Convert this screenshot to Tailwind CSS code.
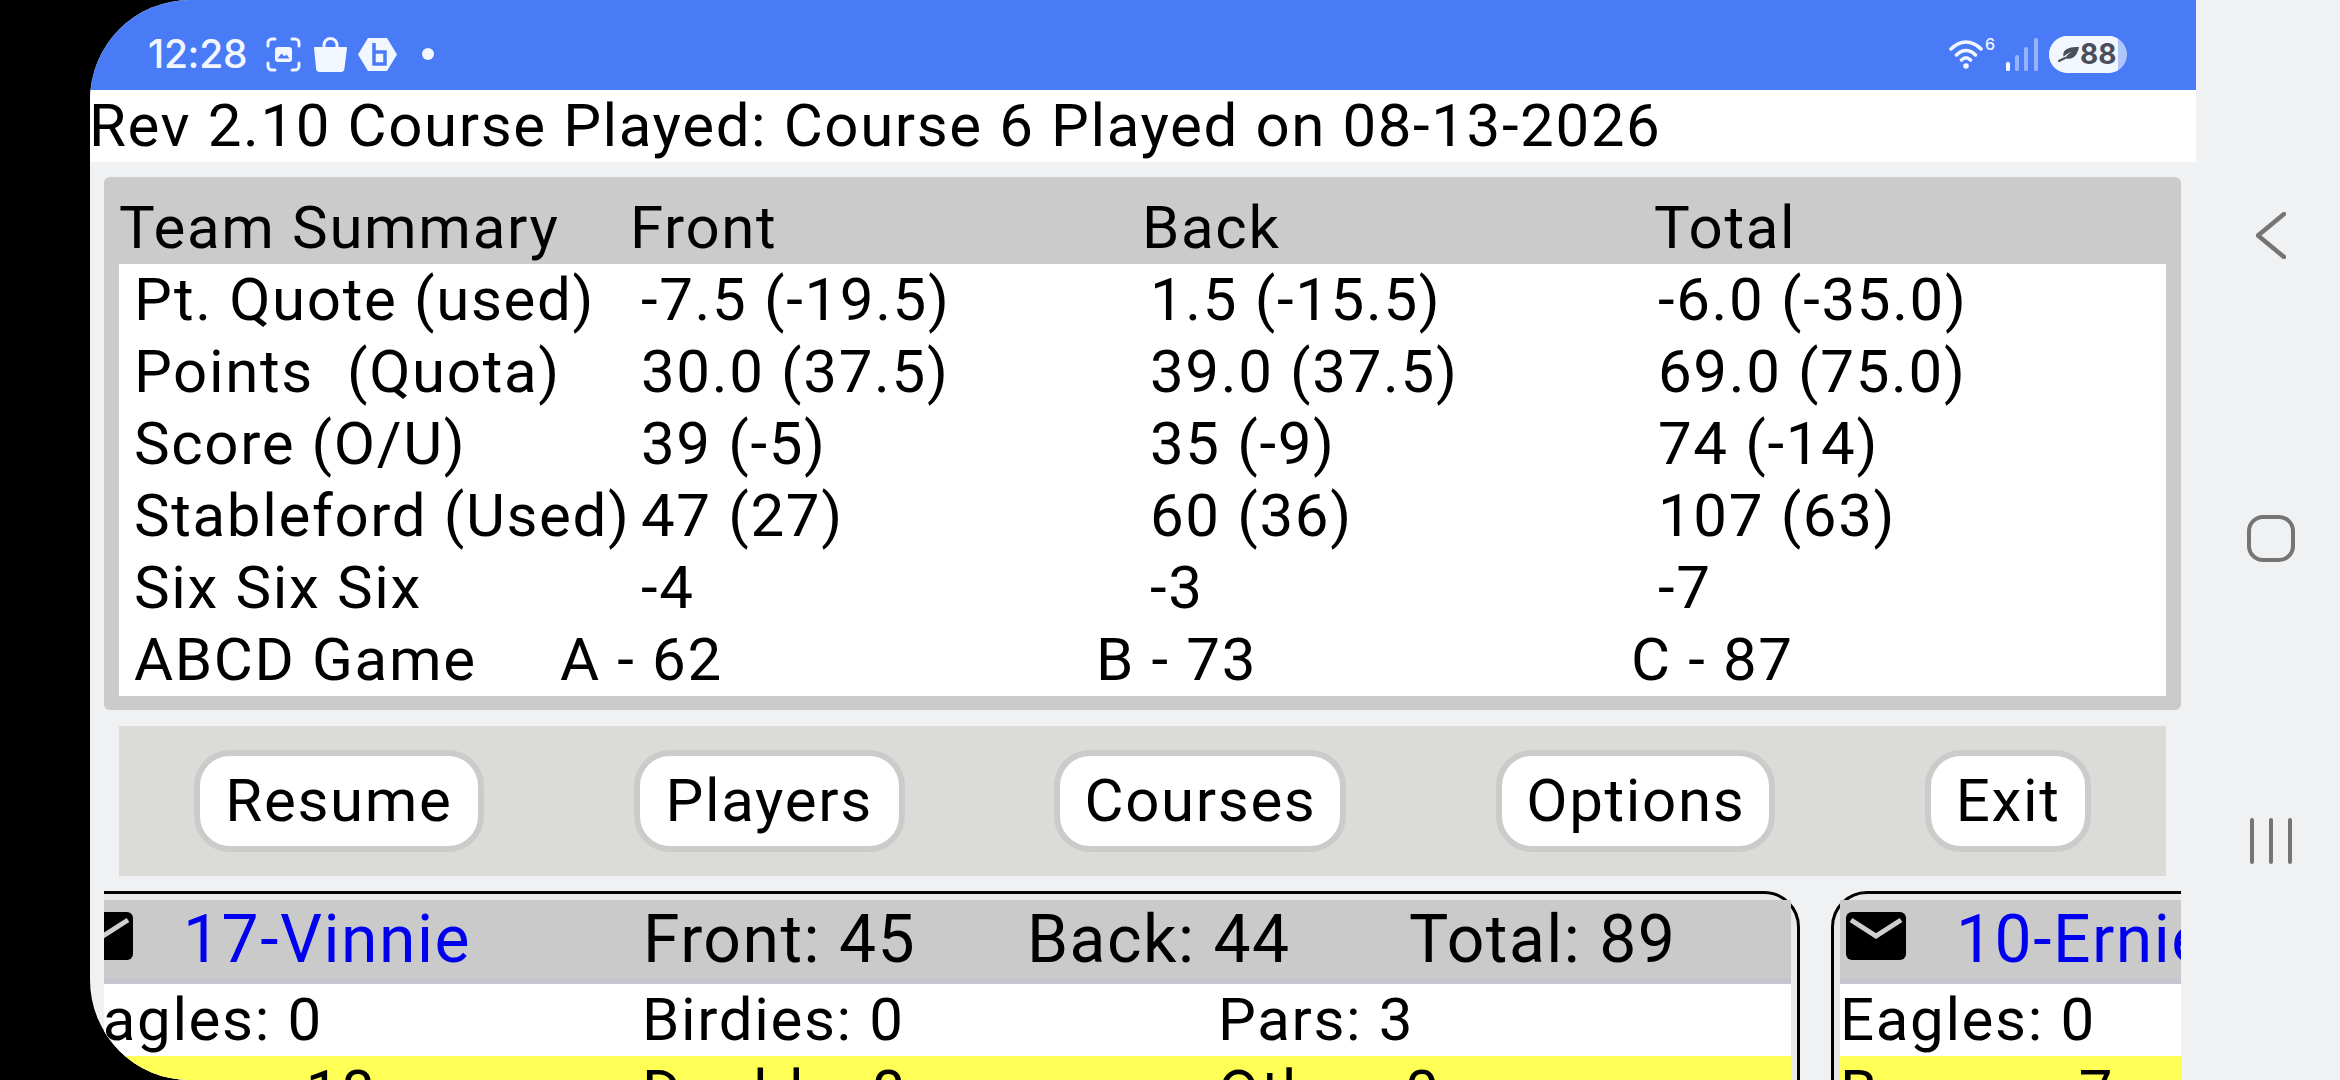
<!doctype html>
<html>
<head>
<meta charset="utf-8">
<title>Team Summary</title>
<script src="https://cdn.jsdelivr.net/npm/@tailwindcss/browser@4"></script>
</head>
<body class="bg-black">
<div class="w-[2340px] h-[1080px] overflow-hidden bg-black pl-[90px] font-[family-name:Roboto,sans-serif] text-black text-[60px] leading-[72px] tracking-[1.65px]">
  <div class="flex w-[2250px] h-[1080px] overflow-hidden rounded-l-[100px] bg-[#f0f1f3]">

    <!-- app column -->
    <div class="w-[2106px] shrink-0">
      <!-- status bar -->
      <div class="h-[90px] bg-[#4a7bf7] flex items-center justify-between text-[#f1f6ff] pt-[18px] pl-[58px] pr-[69px] tracking-normal">
        <div class="flex items-center">
          <span class="font-[family-name:Inter,sans-serif] text-[39px] leading-[38px] font-medium tracking-[-0.3px] w-[118px]">12:28</span>
          <svg class="w-[35px] h-[35px]" viewBox="0 0 35 35" fill="none" stroke="currentColor" stroke-width="3" stroke-linecap="round">
            <path d="M2 9V6a4 4 0 0 1 4-4h3M26 2h3a4 4 0 0 1 4 4v3M33 26v3a4 4 0 0 1-4 4h-3M9 33H6a4 4 0 0 1-4-4v-3"/>
            <rect x="9" y="10" width="17" height="15" rx="3" fill="currentColor" stroke="none"/>
            <path d="M11.5 21.5l4-5 3 3 2-2 3 4z" fill="#4a7bf7" stroke="none"/>
          </svg>
          <svg class="w-[33px] h-[35px] ml-[13px]" viewBox="0 0 33 35" fill="none">
            <path d="M10 12V8a6.500 6.500 0 0 1 13 0v4" stroke="currentColor" stroke-width="3"/>
            <path d="M1 10h31c.6 0 1 .5 1 1l-2.500 20a4 4 0 0 1-4 4h-20.500a4 4 0 0 1-4-4L0 11c0-.5.4-1 1-1z" fill="currentColor"/>
          </svg>
          <svg class="w-[39px] h-[35px] ml-[11px]" viewBox="0 0 39 35">
            <path d="M10 1h19l10 16.500-10 16.500h-19l-10-16.500z" fill="currentColor"/>
            <path d="M16 6v21h11v-12h-11" fill="none" stroke="#4a7bf7" stroke-width="3.500"/>
          </svg>
          <span class="w-[12px] h-[12px] rounded-full bg-[#f1f6ff] ml-[25px]"></span>
        </div>
        <div class="flex items-center">
          <svg class="w-[34px] h-[30px]" viewBox="0 0 34 30" fill="none" stroke="currentColor" stroke-width="3.500" stroke-linecap="round">
            <path d="M2 10c9-9.500 21-9.500 30 0M7.500 16c6-6 13-6 19 0M12.500 21c3-3 6-3 9 0"/>
            <circle cx="17" cy="27" r="2.800" fill="currentColor" stroke="none"/>
          </svg>
          <span class="self-start font-[family-name:Inter,sans-serif] text-[16px] leading-[16px] font-medium ml-[2px] w-[21px]">6</span>
          <svg class="w-[32px] h-[33px]" viewBox="0 0 32 33" fill="currentColor">
            <rect x="0" y="24" width="4" height="9" rx="1.500"/>
            <g opacity="0.45">
              <rect x="9" y="17" width="4" height="16" rx="1.500"/>
              <rect x="18" y="9" width="4" height="24" rx="1.500"/>
              <rect x="28" y="0" width="4" height="33" rx="1.500"/>
            </g>
          </svg>
          <div class="relative ml-[11px] w-[78px] h-[37px] rounded-full overflow-hidden bg-[#b0c6fb]">
            <div class="w-[69px] h-[37px] bg-[#f1f6ff] flex items-center pl-[9px]">
              <svg class="w-[22px] h-[15px] shrink-0" viewBox="0 0 22 15">
                <path d="M21 0C13 0 7 1 5.500 6c-.4 1.400-.3 2.700.3 3.700C8 7.500 11 5.500 14 4.500 11.500 6 9 8 7 11c2.500 1.500 6.500 1 9.500-1.500C19 7.500 20 4 21 0z" fill="#4a4e5a"/>
                <path d="M1 14l6-3" stroke="#4a4e5a" stroke-width="2" stroke-linecap="round"/>
              </svg>
              <span class="font-[family-name:Inter,sans-serif] text-[28px] leading-[37px] font-bold text-[#4a4e5a]">88</span>
            </div>
          </div>
        </div>
      </div>

      <!-- title -->
      <div class="h-[72px] bg-white whitespace-nowrap tracking-[1.6px] ml-[-1px]">Rev 2.10 Course Played: Course 6 Played on 08-13-2026</div>

      <!-- team summary -->
      <div class="mt-[15px] ml-[14px] w-[2077px] h-[533px] bg-[#cbcbcb] rounded-[6px] p-[15px]">
        <div class="grid grid-cols-[511px_512px_512px_1fr] h-[72px]">
          <div>Team Summary</div><div>Front</div><div>Back</div><div>Total</div>
        </div>
        <div class="bg-white h-[432px] pl-[15px] whitespace-nowrap">
          <div class="grid grid-cols-[507px_509px_508px_1fr]"><div>Pt. Quote (used)</div><div>-7.5 (-19.5)</div><div>1.5 (-15.5)</div><div>-6.0 (-35.0)</div></div>
          <div class="grid grid-cols-[507px_509px_508px_1fr]"><div class="whitespace-pre">Points  (Quota)</div><div>30.0 (37.5)</div><div>39.0 (37.5)</div><div>69.0 (75.0)</div></div>
          <div class="grid grid-cols-[507px_509px_508px_1fr]"><div>Score (O/U)</div><div>39 (-5)</div><div>35 (-9)</div><div>74 (-14)</div></div>
          <div class="grid grid-cols-[507px_509px_508px_1fr]"><div>Stableford (Used)</div><div>47 (27)</div><div>60 (36)</div><div>107 (63)</div></div>
          <div class="grid grid-cols-[507px_509px_508px_1fr]"><div>Six Six Six</div><div>-4</div><div>-3</div><div>-7</div></div>
          <div class="grid grid-cols-[426px_536px_535px_1fr]"><div>ABCD Game</div><div>A - 62</div><div>B - 73</div><div>C - 87</div></div>
        </div>
      </div>

      <!-- buttons -->
      <div class="mt-[16px] ml-[29px] w-[2047px] h-[150px] bg-[#dbdcd8] flex items-center justify-around">
        <button class="h-[102px] w-[290px] bg-white border-[6px] border-[#cbcbcb] rounded-[36px]">Resume</button>
        <button class="h-[102px] w-[271px] bg-white border-[6px] border-[#cbcbcb] rounded-[36px]">Players</button>
        <button class="h-[102px] w-[292px] bg-white border-[6px] border-[#cbcbcb] rounded-[36px]">Courses</button>
        <button class="h-[102px] w-[279px] bg-white border-[6px] border-[#cbcbcb] rounded-[36px]">Options</button>
        <button class="h-[102px] w-[166px] bg-white border-[6px] border-[#cbcbcb] rounded-[36px]">Exit</button>
      </div>

      <!-- player cards, scrolled sideways -->
      <div class="mt-[15px] ml-[14px] w-[2077px] h-[189px] overflow-hidden">
        <div class="flex ml-[-46px] gap-[31px] w-max">
          <div class="w-[1742px] h-[300px] shrink-0 border-[3px] border-black rounded-[36px] bg-[#e7e8ea] px-[6px] pt-[6px]">
            <div class="h-[84px] bg-[#cacaca] border-b-[6px] border-[#c5c5d0] relative whitespace-nowrap tracking-[1.5px]">
              <svg class="absolute left-[6px] top-[12px] w-[60px] h-[48px]" viewBox="0 0 60 48">
                <rect width="60" height="48" rx="6" fill="#000"/>
                <path d="M5 8l25 16 25-16" fill="none" stroke="#cfcfcf" stroke-width="5"/>
              </svg>
              <span class="absolute left-[116px] top-[1px] text-[66px] leading-[78px] text-[#0000ee]">17-Vinnie</span>
              <span class="absolute left-[576px] top-[1px] text-[66px] leading-[78px]">Front: 45</span>
              <span class="absolute left-[960px] top-[1px] text-[66px] leading-[78px]">Back: 44</span>
              <span class="absolute left-[1342px] top-[1px] text-[66px] leading-[78px]">Total: 89</span>
            </div>
            <div class="grid grid-cols-[575px_576px_1fr] h-[72px] bg-white"><div>Eagles: 0</div><div>Birdies: 0</div><div>Pars: 3</div></div>
            <div class="grid grid-cols-[575px_576px_1fr] h-[72px] bg-[#ffff55]"><div>Bogeys: 18</div><div>Double: 8</div><div>Other: 0</div></div>
          </div>
          <div class="w-[1742px] h-[300px] shrink-0 border-[3px] border-black rounded-[36px] bg-[#e7e8ea] px-[6px] pt-[6px]">
            <div class="h-[84px] bg-[#cacaca] border-b-[6px] border-[#c5c5d0] relative whitespace-nowrap tracking-[1.5px]">
              <svg class="absolute left-[6px] top-[12px] w-[60px] h-[48px]" viewBox="0 0 60 48">
                <rect width="60" height="48" rx="6" fill="#000"/>
                <path d="M5 8l25 16 25-16" fill="none" stroke="#cfcfcf" stroke-width="5"/>
              </svg>
              <span class="absolute left-[116px] top-[1px] text-[66px] leading-[78px] text-[#0000ee]">10-Ernie</span>
            </div>
            <div class="grid grid-cols-[575px_576px_1fr] h-[72px] bg-white"><div>Eagles: 0</div></div>
            <div class="grid grid-cols-[575px_576px_1fr] h-[72px] bg-[#ffff55]"><div>Bogeys: 7</div></div>
          </div>
        </div>
      </div>
    </div>

    <!-- android nav -->
    <div class="flex-1 flex flex-col items-center pt-[212px] pl-[6px] gap-[256px] text-[#757575]">
      <svg class="w-[30px] h-[47px]" viewBox="0 0 30 47" fill="none" stroke="currentColor" stroke-width="4.500" stroke-linecap="round" stroke-linejoin="round">
        <path d="M28 2L2 23.500 28 45"/>
      </svg>
      <div class="w-[48px] h-[47px] border-[4px] border-[#757575] rounded-[16px]"></div>
      <div class="flex gap-[15px]">
        <span class="w-[4px] h-[46px] rounded-full bg-[#757575]"></span>
        <span class="w-[4px] h-[46px] rounded-full bg-[#757575]"></span>
        <span class="w-[4px] h-[46px] rounded-full bg-[#757575]"></span>
      </div>
    </div>

  </div>
</div>
</body>
</html>
